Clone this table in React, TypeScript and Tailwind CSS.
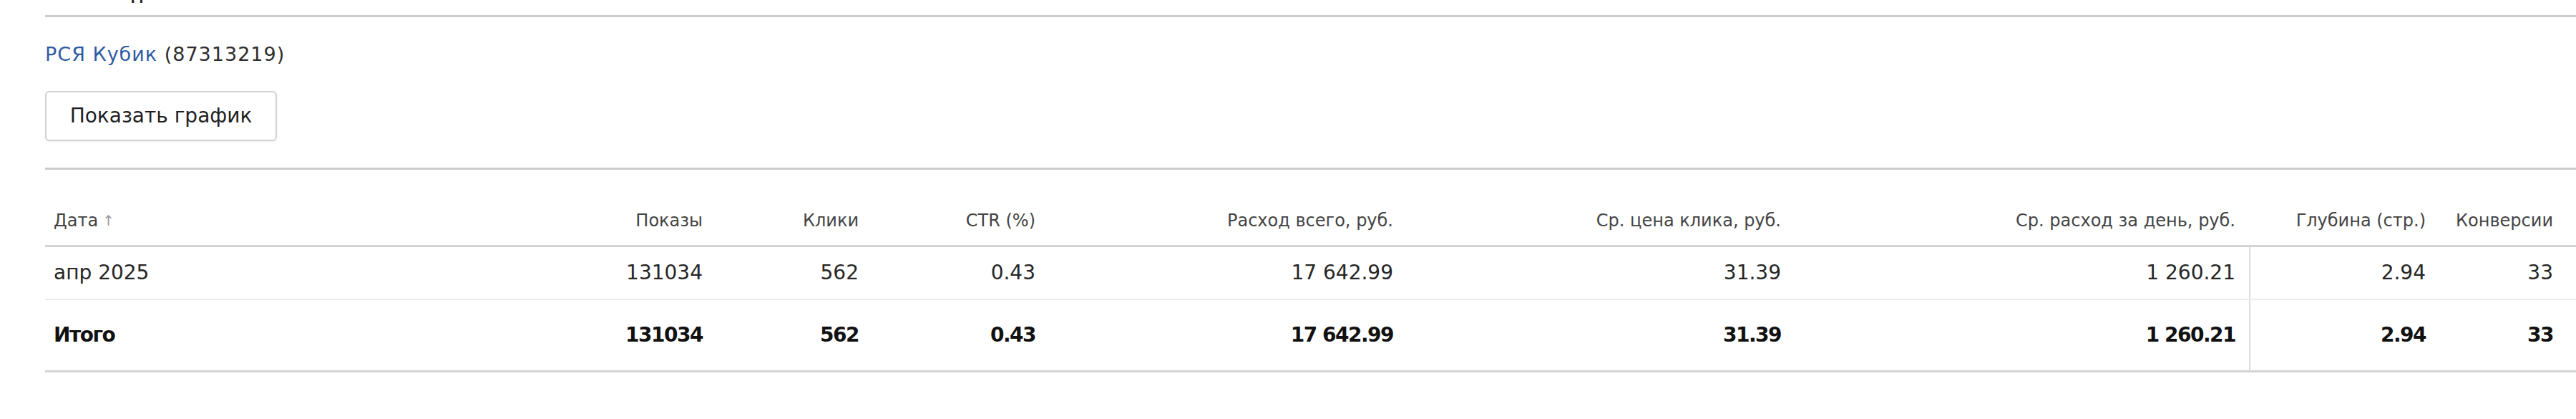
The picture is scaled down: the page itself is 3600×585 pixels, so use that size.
import React from 'react';

interface Row {
  date: string;
  shows: string;
  clicks: string;
  ctr: string;
  spend: string;
  cpc: string;
  perDay: string;
  depth: string;
  conv: string;
  total?: boolean;
}

const headers = [
  'Показы',
  'Клики',
  'CTR (%)',
  'Расход всего, руб.',
  'Ср. цена клика, руб.',
  'Ср. расход за день, руб.',
  'Глубина (стр.)',
  'Конверсии',
];

const rows: Row[] = [
  { date: 'апр 2025', shows: '131034', clicks: '562', ctr: '0.43', spend: '17 642.99', cpc: '31.39', perDay: '1 260.21', depth: '2.94', conv: '33' },
  { date: 'Итого', shows: '131034', clicks: '562', ctr: '0.43', spend: '17 642.99', cpc: '31.39', perDay: '1 260.21', depth: '2.94', conv: '33', total: true },
];

// ширины колонок сняты со скриншота
const grid = 'grid grid-cols-[737px_201px_218px_247px_500px_542px_635px_266px_1fr]';

export default function App() {
  return (
    <div className="min-h-[585px] w-full bg-white font-['DejaVu_Sans',Arial,sans-serif] text-[#333]">
      <div className="pl-[63px]">
        {/* заголовок, уехавший за верх экрана */}
        <div className="h-[6px] overflow-hidden">
          <div className="-mt-[23px] font-['Liberation_Sans',Arial,sans-serif] text-[24px] leading-[28px] font-bold tracking-[1px] text-[#222] whitespace-nowrap">
            Отчёт по дням
          </div>
        </div>
        <div className="mt-[15px] h-[3px] bg-[#cccccc]" />

        <div className="mt-[37px] text-[27px] leading-[30px] tracking-[1px] whitespace-nowrap">
          <a href="#" className="text-[#2f5ba3]">РСЯ Кубик</a>
          <span className="text-[#2e2e2e]"> (87313219)</span>
        </div>

        <button
          type="button"
          className="mt-[36px] flex h-[70px] w-[324px] items-center justify-center rounded-[6px] border-2 border-[#d2d2d2] bg-white text-[28px] text-[#1f1f1f] shadow-[0_1px_2px_rgba(0,0,0,0.08)]"
        >
          Показать график
        </button>

        <div className="mt-[37px] h-[3px] bg-[#cccccc]" />

        {/* таблица */}
        <div className={`${grid} h-[108px] border-b-[3px] border-[#d4d4d4] text-[24px] leading-[28px] text-[#444]`}>
          <div className="flex items-end pb-[20px] pl-[12px]">
            Дата<span className="ml-[6px] text-[20px] text-[#9a9a9a]">↑</span>
          </div>
          {headers.map((h, i) => (
            <div
              key={h}
              className={`flex items-end justify-end whitespace-nowrap pb-[20px] ${i === headers.length - 1 ? 'pr-[32px]' : 'pr-[19px]'}`}
            >
              {h}
            </div>
          ))}
        </div>

        {rows.map((r) => {
          const cells = [r.shows, r.clicks, r.ctr, r.spend, r.cpc, r.perDay, r.depth, r.conv];
          return (
            <div
              key={r.date}
              className={`${grid} text-[28px] leading-[32px] ${
                r.total
                  ? 'h-[101px] border-b-[3px] border-[#d4d4d4] font-bold tracking-[-1.5px] text-[#111]'
                  : 'h-[74px] border-b-2 border-[#ebebeb] text-[#262626]'
              }`}
            >
              <div className="flex items-center pl-[12px] whitespace-nowrap">{r.date}</div>
              {cells.map((c, i) => (
                <div
                  key={i}
                  className={`flex items-center justify-end whitespace-nowrap ${
                    i === cells.length - 1 ? 'pr-[32px]' : 'pr-[19px]'
                  } ${i === 6 ? 'border-l-2 border-[#dcdcdc]' : ''}`}
                >
                  {c}
                </div>
              ))}
            </div>
          );
        })}
      </div>
    </div>
  );
}
